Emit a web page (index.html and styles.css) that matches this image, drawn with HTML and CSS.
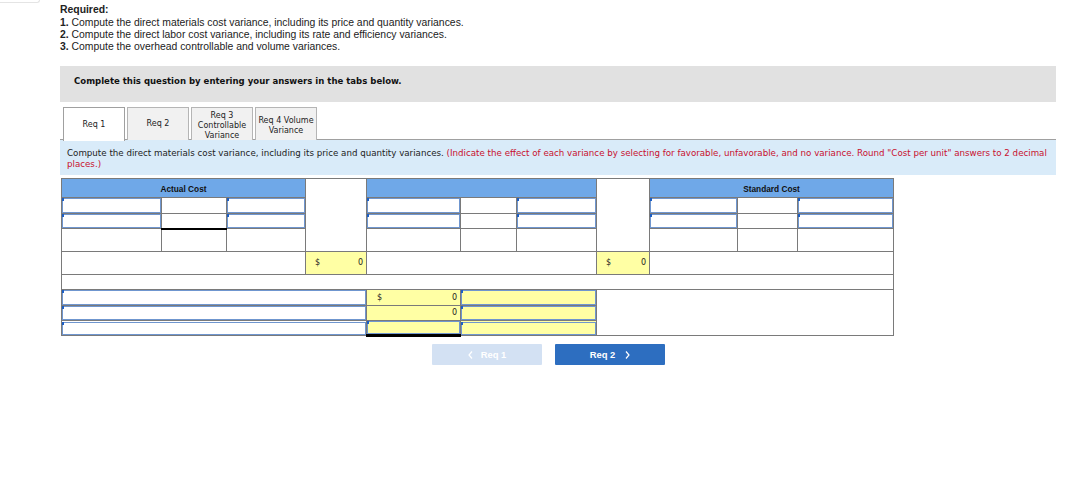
FILE: index.html
```html
<!DOCTYPE html>
<html>
<head>
<meta charset="utf-8">
<link rel="stylesheet" href="styles.css">
</head>
<body>
<div class="stub"></div>
<div class="page">
  <div class="required">
    <div class="req-title">Required:</div>
    <div><b>1.</b> Compute the direct materials cost variance, including its price and quantity variances.</div>
    <div><b>2.</b> Compute the direct labor cost variance, including its rate and efficiency variances.</div>
    <div><b>3.</b> Compute the overhead controllable and volume variances.</div>
  </div>

  <div class="panel">Complete this question by entering your answers in the tabs below.</div>

  <div class="tabs">
    <div class="tab active">Req 1</div>
    <div class="tab">Req 2</div>
    <div class="tab multi">Req 3<br>Controllable<br>Variance</div>
    <div class="tab multi">Req 4 Volume<br>Variance</div>
  </div>

  <div class="instr"><span>Compute the direct materials cost variance, including its price and quantity variances.</span> <span class="red">(Indicate the effect of each variance by selecting for favorable, unfavorable, and no variance. Round "Cost per unit" answers to 2 decimal</span> <span class="red">places.)</span></div>

  <table class="grid">
    <colgroup>
      <col style="width:100px"><col style="width:65px"><col style="width:79px">
      <col style="width:61px">
      <col style="width:94px"><col style="width:56px"><col style="width:80px">
      <col style="width:53px">
      <col style="width:88px"><col style="width:60px"><col style="width:96px">
    </colgroup>
    <tr class="rh">
      <td colspan="3" class="hd">Actual Cost</td>
      <td rowspan="4" class="blank"></td>
      <td colspan="3" class="hd"></td>
      <td rowspan="4" class="blank"></td>
      <td colspan="3" class="hd">Standard Cost</td>
    </tr>
    <tr class="r1">
      <td><div class="inp"></div></td><td></td><td><div class="inp"></div></td>
      <td><div class="inp"></div></td><td></td><td><div class="inp"></div></td>
      <td><div class="inp"></div></td><td></td><td><div class="inp"></div></td>
    </tr>
    <tr class="r2">
      <td><div class="inp"></div></td><td class="ul"></td><td><div class="inp"></div></td>
      <td><div class="inp"></div></td><td></td><td><div class="inp"></div></td>
      <td><div class="inp"></div></td><td></td><td><div class="inp"></div></td>
    </tr>
    <tr class="r3">
      <td></td><td></td><td></td>
      <td></td><td></td><td></td>
      <td></td><td></td><td></td>
    </tr>
    <tr class="r4">
      <td colspan="3"></td>
      <td class="yel"><div class="amt"><span class="dol">$</span><span>0</span></div></td>
      <td colspan="3"></td>
      <td class="yel"><div class="amt"><span class="dol">$</span><span>0</span></div></td>
      <td colspan="3"></td>
    </tr>
    <tr class="r5">
      <td colspan="11"></td>
    </tr>
    <tr class="r6">
      <td colspan="4"><div class="inp"></div></td>
      <td class="yel"><div class="amt"><span class="dol dol2">$</span><span>0</span></div></td>
      <td colspan="2" class="yel"><div class="inp y"></div></td>
      <td colspan="4" rowspan="3"></td>
    </tr>
    <tr class="r7">
      <td colspan="4"><div class="inp"></div></td>
      <td class="yel"><div class="amt"><span></span><span>0</span></div></td>
      <td colspan="2" class="yel"><div class="inp y"></div></td>
    </tr>
    <tr class="r8">
      <td colspan="4"><div class="inp"></div></td>
      <td class="yel dbl"><div class="inp y"></div></td>
      <td colspan="2" class="yel"><div class="inp y"></div></td>
    </tr>
  </table>

  <div class="nav">
    <div class="btn prev"><svg width="5" height="8" viewBox="0 0 5 8"><polyline points="4,0.5 1,4 4,7.5" fill="none" stroke="#fff" stroke-width="1.2"/></svg><span>Req 1</span></div>
    <div class="btn next"><span>Req 2</span><svg width="5" height="8" viewBox="0 0 5 8"><polyline points="1,0.5 4,4 1,7.5" fill="none" stroke="#fff" stroke-width="1.2"/></svg></div>
  </div>
</div>
</body>
</html>
```

FILE: styles.css
```css
* { box-sizing: border-box; }
html, body { margin: 0; padding: 0; background: #fff; }
body { font-family: "Liberation Sans", Arial, sans-serif; color: #222; }

.stub {
  width: 40px;
  height: 3px;
  border: 1px solid #e4e4e4;
  border-top: none;
  border-left: none;
  border-radius: 0 0 4px 0;
}

.page { padding-left: 60px; width: 1056px; }

.required {
  margin-top: 1px;
  font-size: 10.4px;
  line-height: 12px;
  color: #222;
}
.req-title { font-weight: bold; margin-bottom: 1px; }

.panel {
  margin-top: 13px;
  height: 36px;
  background: #e1e1e1;
  padding: 10px 0 0 14px;
  font-family: "DejaVu Sans", Verdana, sans-serif;
  font-weight: bold;
  font-size: 8.55px;
  line-height: 11px;
  color: #111;
}

.tabs {
  margin-top: 5px;
  display: flex;
  gap: 2px;
  padding-left: 3px;
  border-bottom: 1px solid #a0a0a0;
  height: 33px;
}
.tab {
  width: 62px;
  height: 33px;
  border: 1px solid #b5b5b5;
  border-bottom: none;
  background: #f1f1f1;
  display: flex;
  align-items: center;
  justify-content: center;
  text-align: center;
  font-family: "DejaVu Sans", Verdana, sans-serif;
  font-size: 8px;
  line-height: 10px;
  color: #222;
  white-space: nowrap;
}
.tab.multi { padding-top: 3px; }
.tab.active {
  background: #fff;
  border-color: #a0a0a0;
  height: 34px;
  margin-bottom: -1px;
  padding-top: 1px;
}

.instr {
  height: 35px;
  background: #d9ebf9;
  padding: 8px 0 0 7px;
  font-family: "DejaVu Sans", Verdana, sans-serif;
  font-size: 8.7px;
  line-height: 11px;
  color: #222;
}
.red { color: #c8102e; }

.grid {
  margin: 3px 0 0 1px;
  border-collapse: collapse;
  table-layout: fixed;
  width: 833px;
}
.grid td {
  border: 1px solid #7a7a7a;
  padding: 0;
  background: #fff;
  vertical-align: middle;
}
.rh { height: 19px; }
.r1 { height: 16px; }
.r2 { height: 15px; }
.r3 { height: 23px; }
.r4 { height: 23px; }
.r5 { height: 15px; }
.r6 { height: 16px; }
.r7 { height: 15px; }
.r8 { height: 15px; }

.grid td.hd {
  background: #6fa8e8;
  text-align: center;
  vertical-align: top;
  padding-top: 5px;
  font-family: "Liberation Sans", Arial, sans-serif;
  font-weight: bold;
  font-size: 8.3px;
  color: #111;
}
.grid td.yel { background: #ffffa4; }
.grid td.ul { border-bottom: 2px solid #000; }
.grid td.dbl { border-top: 1px solid #000; border-bottom: 3px solid #000; }

.inp {
  position: relative;
  width: 100%;
  border: 1.5px solid #6f96cf;
  background: #fff;
}
.inp.y { background: #ffffa4; }
.inp::before {
  content: "";
  position: absolute;
  left: -1px;
  top: -1px;
  width: 2px;
  height: 3px;
  background: #1d5fc4;
}
.r1 .inp { height: 15px; }
.r2 .inp { height: 14px; }
.r6 .inp { height: 15px; }
.r7 .inp { height: 14px; }
.r8 .inp { height: 13px; }

.amt {
  display: flex;
  justify-content: space-between;
  padding: 0 3px 0 9px;
  font-family: "DejaVu Sans", Verdana, sans-serif;
  font-size: 8px;
  color: #222;
  line-height: 10px;
}
.dol2 { padding-left: 1px; }

.nav {
  display: flex;
  gap: 13px;
  padding-left: 372px;
  margin-top: 7px;
}
.btn {
  width: 110px;
  height: 21px;
  display: flex;
  align-items: center;
  justify-content: center;
  gap: 8px;
  font-family: "Liberation Sans", Arial, sans-serif;
  font-weight: bold;
  font-size: 9.4px;
  color: #fff;
  border-radius: 1px;
}
.btn.prev { background: #d3e1f3; }
.btn.next { background: #2d6ec0; gap: 10px; }
```
